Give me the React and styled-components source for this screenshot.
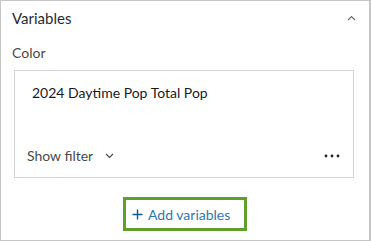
import React from 'react'
import styled, { createGlobalStyle } from 'styled-components'

const Global = createGlobalStyle`
  html, body { margin: 0; padding: 0; background: #fff; }
  body { font-family: Lato, "Noto Sans", sans-serif; }
`

function App() {
  return (
    <>
      <Global />
      <Panel>
        <Header>
          <Title>Variables</Title>
          <svg width="9" height="6" viewBox="0 0 9 6">
            <path d="M1 5 L4.5 1.5 L8 5" fill="none" stroke="#6a6a6a" strokeWidth="1.1" />
          </svg>
        </Header>
        <Label>Color</Label>
        <Card>
          <CardTitle>2024 Daytime Pop Total Pop</CardTitle>
          <CardFooter>
            <FilterToggle>
              Show filter
              <svg width="9" height="6" viewBox="0 0 9 6">
                <path d="M1 1 L4.5 4.5 L8 1" fill="none" stroke="#4a4a4a" strokeWidth="1.1" />
              </svg>
            </FilterToggle>
            <svg width="16" height="4" viewBox="0 0 16 4">
              <circle cx="2" cy="2" r="1.4" fill="#222" />
              <circle cx="8" cy="2" r="1.4" fill="#222" />
              <circle cx="14" cy="2" r="1.4" fill="#222" />
            </svg>
          </CardFooter>
        </Card>
        <Actions>
          <AddButton>
            <svg width="11" height="11" viewBox="0 0 11 11">
              <path d="M5.5 0.5 V10.5 M0.5 5.5 H10.5" stroke="#0b5f97" strokeWidth="1.4" />
            </svg>
            Add variables
          </AddButton>
        </Actions>
      </Panel>
    </>
  )
}

export default App

const Panel = styled.div`
  width: 371px;
  height: 241px;
  box-sizing: border-box;
  border: 1px solid #c6c6c6;
  border-right-width: 2px;
  display: flex;
  flex-direction: column;
`

const Header = styled.div`
  display: flex;
  align-items: center;
  justify-content: space-between;
  height: 33px;
  padding: 0 13px 0 11px;
`

const Title = styled.span`
  font-size: 15px;
  color: #2b2b2b;
`

const Label = styled.div`
  margin: 3px 0 0 11px;
  height: 32px;
  line-height: 32px;
  font-size: 14px;
  color: #4a4a4a;
`

const Card = styled.div`
  margin: 1px 15px 0 13px;
  height: 108px;
  box-sizing: border-box;
  border: 1px solid #d4d4d4;
  display: flex;
  flex-direction: column;
  justify-content: space-between;
  padding: 13px 13px 13px 12px;
`

const CardTitle = styled.div`
  padding-left: 5px;
  font-size: 14px;
  color: #1a1a1a;
`

const CardFooter = styled.div`
  display: flex;
  align-items: center;
  justify-content: space-between;
`

const FilterToggle = styled.div`
  display: flex;
  align-items: center;
  gap: 12px;
  font-size: 14px;
  color: #4a4a4a;
`

const Actions = styled.div`
  display: flex;
  justify-content: center;
  margin-top: 19px;
`

const AddButton = styled.div`
  width: 124px;
  height: 34px;
  box-sizing: border-box;
  border: 3px solid #5f9f2a;
  padding-left: 6px;
  display: flex;
  align-items: center;
  gap: 5px;
  font-size: 14px;
  color: #2f78ad;
`
